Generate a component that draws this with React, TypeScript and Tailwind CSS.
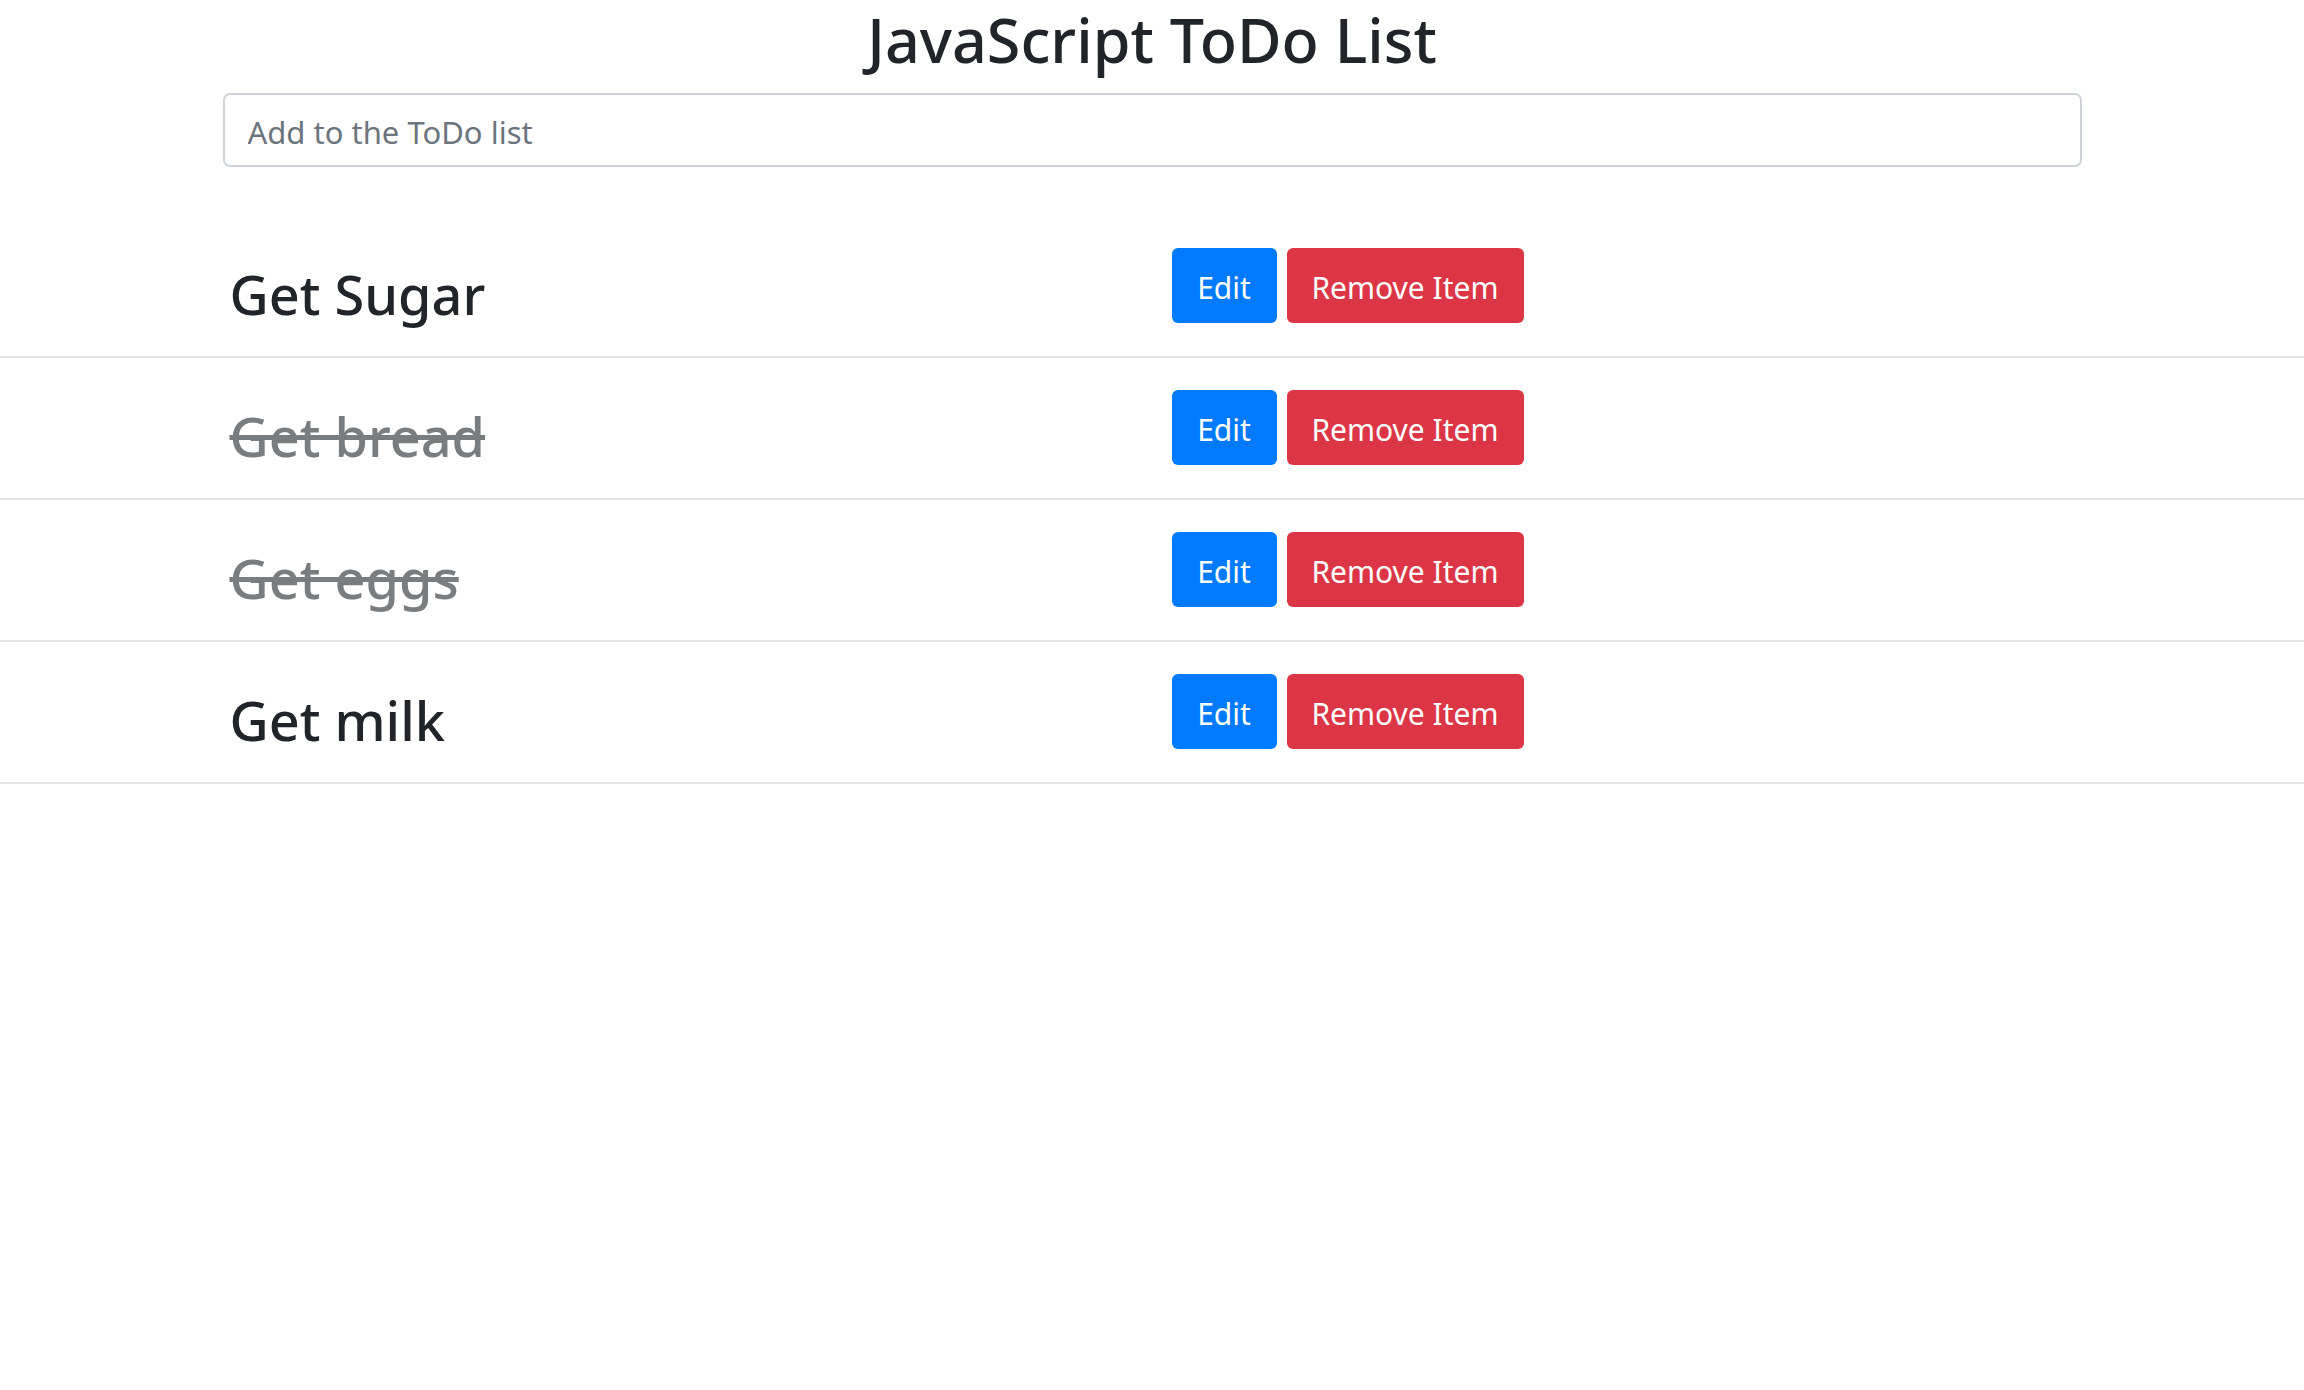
import React from "react";

const items = [
  { text: "Get Sugar", done: false },
  { text: "Get bread", done: true },
  { text: "Get eggs", done: true },
  { text: "Get milk", done: false },
];

export default function App() {
  return (
    <div
      className="w-full min-h-screen bg-white text-[#212529]"
      style={{ fontFamily: '"Noto Sans", "Open Sans", sans-serif' }}
    >
      <h1 className="text-center text-[61px] leading-[1.2] pt-[3px] font-medium">
        JavaScript ToDo List
      </h1>
      <div className="w-[1859px] mx-auto mt-[17px]">
        <input
          type="text"
          placeholder="Add to the ToDo list"
          className="w-full h-[74px] border-2 border-[#ced4da] rounded-[7px] pl-[23px] pt-[3px] text-[31px] placeholder:text-[#6c757d] outline-none"
        />
      </div>
      <div className="mt-[49px]">
        {items.map((it) => (
          <div key={it.text} className="w-full border-b-2 border-[#e3e3e3] h-[142px]">
            <div className="w-[1859px] mx-auto flex items-start">
              <div className="w-[949px] pt-[51px] pl-[7px]">
                <span
                  className={
                    "text-[54px] leading-none block font-medium " +
                    (it.done ? "line-through text-[#7a7d80]" : "text-[#212529]")
                  }
                >
                  {it.text}
                </span>
              </div>
              <div className="flex gap-[10px] pt-[32px]">
                <button className="w-[105px] h-[75px] rounded-[6px] bg-[#007bff] text-white text-[30px] flex items-center justify-center pt-[3px]">
                  Edit
                </button>
                <button className="w-[237px] h-[75px] rounded-[6px] bg-[#dc3545] text-white text-[30px] flex items-center justify-center pt-[3px]">
                  Remove Item
                </button>
              </div>
            </div>
          </div>
        ))}
      </div>
    </div>
  );
}
